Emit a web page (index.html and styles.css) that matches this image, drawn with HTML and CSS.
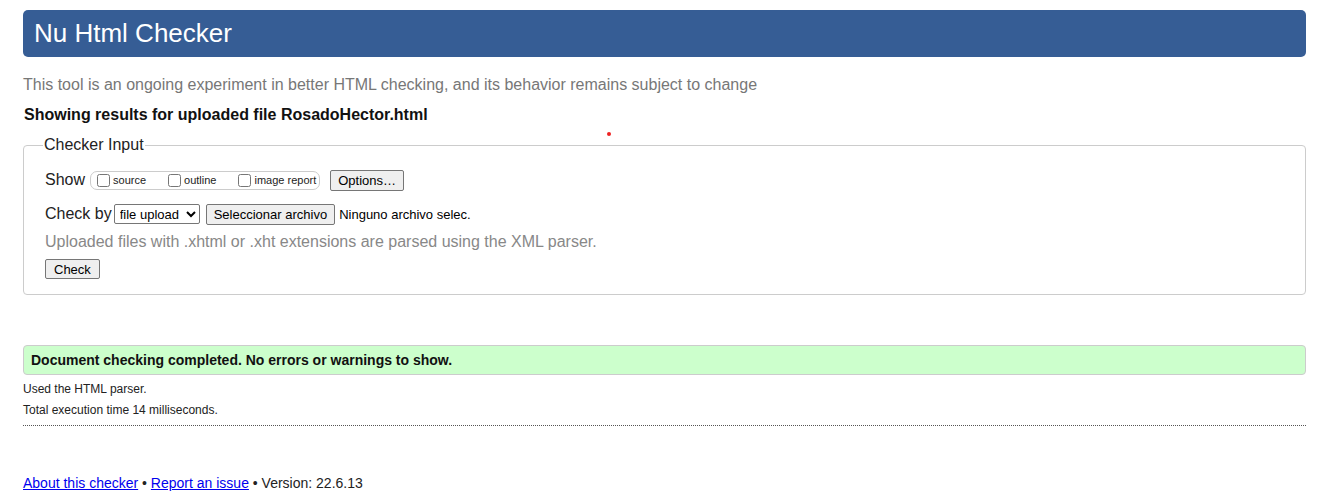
FILE: index.html
```html
<!DOCTYPE html>
<html>
<head>
<meta charset="utf-8">
<title>Nu Html Checker</title>
<link rel="stylesheet" href="styles.css">
</head>
<body>
<h1 class="title">Nu Html Checker</h1>
<p class="intro">This tool is an ongoing experiment in better HTML checking, and its behavior remains subject to change</p>
<p class="showing">Showing results for uploaded file RosadoHector.html</p>
<span class="dot"></span>
<fieldset class="checker">
  <legend>Checker Input</legend>
  <div class="row show-row">
    <span class="lbl">Show</span>
    <span class="group">
      <label><input type="checkbox">source</label>
      <label><input type="checkbox">outline</label>
      <label><input type="checkbox">image report</label>
    </span>
    <button class="btn">Options…</button>
  </div>
  <div class="row by-row">
    <span class="lbl">Check by</span>
    <select class="sel"><option>file upload</option></select>
    <button class="btn">Seleccionar archivo</button>
    <span class="nofile">Ninguno archivo selec.</span>
  </div>
  <p class="hint">Uploaded files with .xhtml or .xht extensions are parsed using the XML parser.</p>
  <button class="btn check">Check</button>
</fieldset>
<p class="success">Document checking completed. No errors or warnings to show.</p>
<p class="meta">Used the HTML parser.</p>
<p class="meta">Total execution time 14 milliseconds.</p>
<hr class="dotted">
<p class="footer"><a href="#">About this checker</a> • <a href="#">Report an issue</a> • Version: 22.6.13</p>
</body>
</html>
```
FILE: styles.css
```css
html, body { background: #fff; }
body {
  margin: 0;
  padding: 10px 12px 0 23px;
  font-family: "Liberation Sans", Arial, sans-serif;
  color: #000;
  position: relative;
}
.title {
  margin: 0;
  background: #365d95;
  color: #fff;
  font-weight: normal;
  font-size: 26px;
  line-height: 47px;
  height: 47px;
  padding: 0 11px;
  border-radius: 5px;
}
.intro {
  margin: 18px 0 0 0;
  font-size: 16px;
  line-height: 20px;
  color: #777;
}
.showing {
  margin: 10px 0 0 1px;
  font-size: 16px;
  line-height: 20px;
  font-weight: bold;
  color: #111;
}
.dot {
  position: absolute;
  left: 607px;
  top: 132px;
  width: 4px;
  height: 4px;
  border-radius: 50%;
  background: #e22;
}
.checker {
  margin: 11px 0 0 0;
  border: 1px solid #ccc;
  border-radius: 4px;
  padding: 15px 21px 15px 21px;
  min-width: 0;
}
.checker legend {
  font-size: 16px;
  padding: 0 1px;
  margin-left: -2px;
  color: #222;
}
.row {
  display: flex;
  align-items: center;
  font-size: 16px;
  color: #222;
}
.show-row { height: 20px; margin-top: 1px; }
.lbl { margin-right: 5px; }
.group {
  display: inline-flex;
  align-items: center;
  border: 1px solid #ccc;
  border-radius: 7px;
  height: 17px;
  padding: 0 3px 0 4px;
  font-size: 11px;
  margin-right: 10px;
}
.group label {
  display: inline-flex;
  align-items: center;
  margin-right: 19px;
}
.group label:last-child { margin-right: 0; }
.group input {
  margin: 0 3px 0 3px;
  width: 13px;
  height: 13px;
}
.group label:first-child input { margin-left: 2px; }
.btn {
  font-family: "Liberation Sans", Arial, sans-serif;
  font-size: 13px;
  height: 21px;
  padding: 0 7px;
  border: 1px solid #767676;
  border-radius: 2px;
  background: #efefef;
  color: #000;
}
.by-row { margin-top: 14px; height: 20px; }
.by-row .lbl { margin-right: 2px; }
.sel {
  font-family: "Liberation Sans", Arial, sans-serif;
  font-size: 13px;
  height: 20px;
  width: 86px;
  border: 1px solid #767676;
  border-radius: 2px;
  background: #fff;
  margin-right: 6px;
  padding: 0 0 0 1px;
}
.nofile { font-size: 13px; margin-left: 4px; color: #000; }
.hint {
  margin: 8px 0 0 0;
  font-size: 16px;
  line-height: 20px;
  color: #888;
}
.check { margin-top: 7px; margin-left: 0; height: 20px; padding: 0 8px; }
.success {
  margin: 50px 0 0 0;
  background: #ccffcc;
  border: 1px solid #ccc;
  border-radius: 4px;
  font-size: 14px;
  font-weight: bold;
  line-height: 28px;
  height: 28px;
  padding: 0 7px;
  color: #111;
}
.meta {
  margin: 7px 0 0 0;
  font-size: 12px;
  line-height: 15px;
  color: #222;
}
.meta + .meta { margin-top: 6px; }
.dotted {
  border: 0;
  border-top: 1px dotted #555;
  margin: 7px 0 0 0;
  height: 0;
}
.footer {
  margin: 49px 0 0 0;
  font-size: 14px;
  line-height: 16px;
  color: #222;
}
.footer a { color: #00e; }
```
